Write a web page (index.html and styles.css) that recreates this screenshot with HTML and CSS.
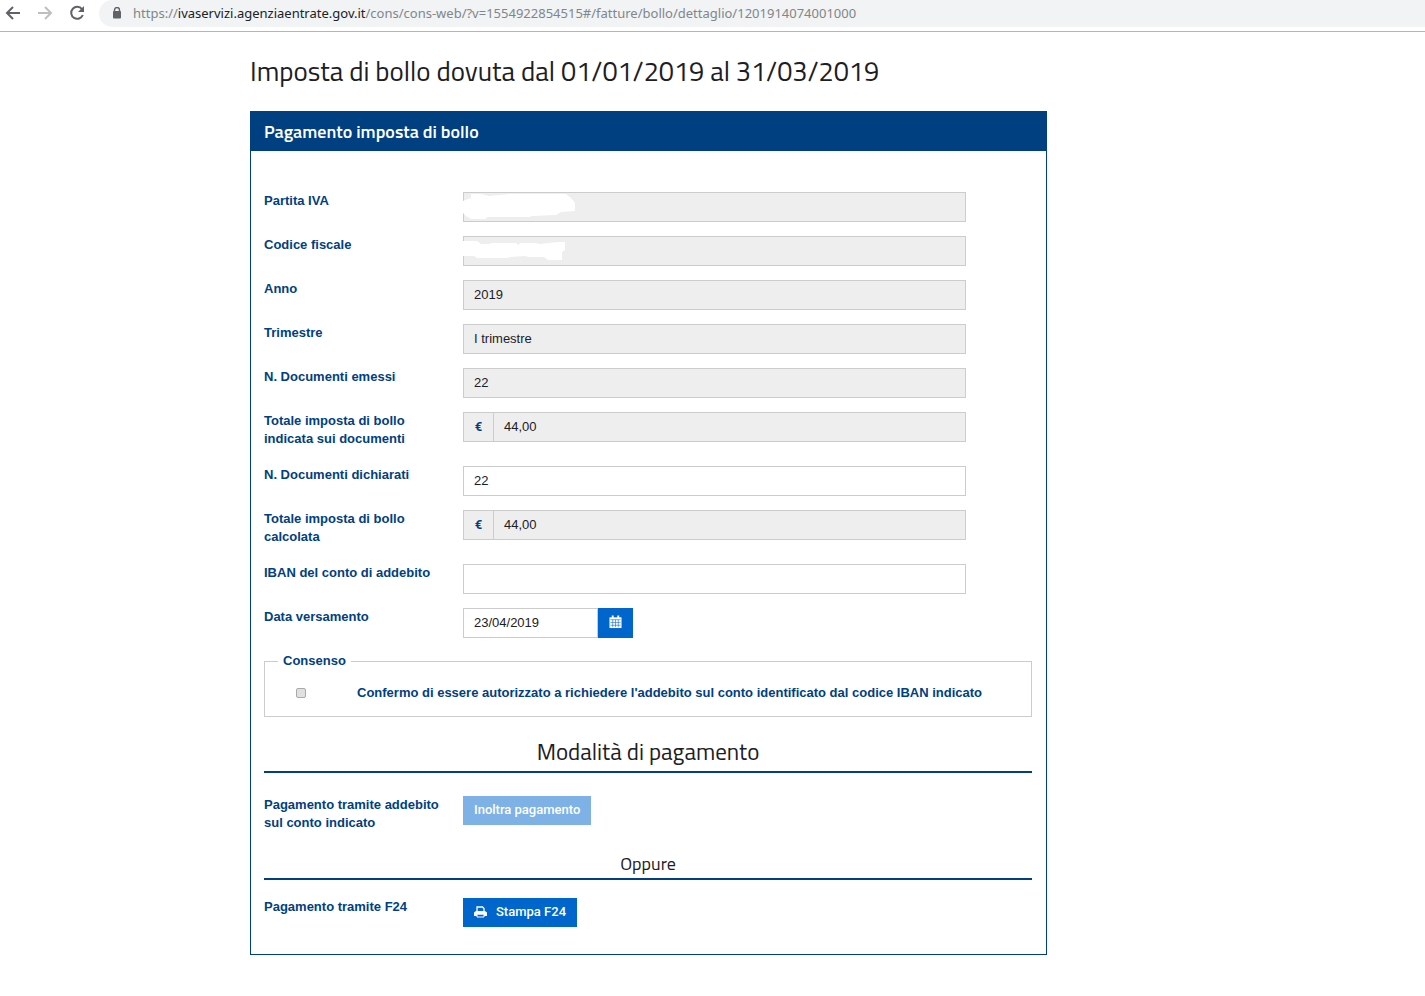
FILE: index.html
```html
<!DOCTYPE html>
<html lang="it">
<head>
  <meta charset="UTF-8">
  <meta name="viewport" content="width=device-width, initial-scale=1">
  <title>Imposta di bollo</title>
  <link rel="stylesheet" href="styles.css">
</head>
<body>
  <header class="toolbar">
    <button type="button" class="nav-btn" aria-label="Indietro">
      <svg width="16" height="16" viewBox="0 0 16 16"><path d="M15 8H2M8 2L2 8l6 6" fill="none" stroke="#5f6368" stroke-width="2"/></svg>
    </button>
    <button type="button" class="nav-btn" aria-label="Avanti">
      <svg width="16" height="16" viewBox="0 0 16 16"><path d="M1 8h13M8 2l6 6-6 6" fill="none" stroke="#bdc0c3" stroke-width="2"/></svg>
    </button>
    <button type="button" class="nav-btn" aria-label="Ricarica">
      <svg width="16" height="16" viewBox="0 0 16 16"><path d="M13 4.2A6 6 0 1 0 13.8 10" fill="none" stroke="#5f6368" stroke-width="2"/><path d="M15 1v6H9z" fill="#5f6368"/></svg>
    </button>
    <div class="address">
      <svg width="10" height="12" viewBox="0 0 10 12"><path d="M2.5 5V3a2.5 2.5 0 0 1 5 0v2" fill="none" stroke="#5f6368" stroke-width="1.4"/><rect x="1" y="4" width="8" height="7.5" rx="1" fill="#5f6368"/></svg>
      <span class="url">https://<span class="host">ivaservizi.agenziaentrate.gov.it</span>/cons/cons-web/?v=1554922854515#/fatture/bollo/dettaglio/1201914074001000</span>
    </div>
  </header>

  <main class="container">
    <h1>Imposta di bollo dovuta dal 01/01/2019 al 31/03/2019</h1>

    <section class="panel">
      <h2 class="panel-heading">Pagamento imposta di bollo</h2>
      <form class="panel-body">
        <div class="row">
          <label for="piva">Partita IVA</label>
          <div class="field">
            <input type="text" id="piva" class="control" readonly>
            <svg class="mask" width="114" height="30" viewBox="0 0 114 30"><path d="M0 9L8 6V2h10l8 2 20-2h57l5 4 4 5v8l-14 1-5 3-24 1-3 1H25l-3 2H8l-5-3-3-3z" fill="#fff"/></svg>
          </div>
        </div>
        <div class="row">
          <label for="cf">Codice fiscale</label>
          <div class="field">
            <input type="text" id="cf" class="control" readonly>
            <svg class="mask" width="114" height="30" viewBox="0 0 114 30"><path d="M0 5h14l4 3h8l3-1h24l2 2 3-2h14l5 1 18-2h7v8l-3 2v8H85l-4-3H66l-4-1-15 1-2 1H14l-3-2H0z" fill="#fff"/></svg>
          </div>
        </div>
        <div class="row">
          <label for="anno">Anno</label>
          <div class="field"><input type="text" id="anno" class="control" value="2019" readonly></div>
        </div>
        <div class="row">
          <label for="trimestre">Trimestre</label>
          <div class="field"><input type="text" id="trimestre" class="control" value="I trimestre" readonly></div>
        </div>
        <div class="row">
          <label for="emessi">N. Documenti emessi</label>
          <div class="field"><input type="text" id="emessi" class="control" value="22" readonly></div>
        </div>
        <div class="row">
          <label for="totIndicata">Totale imposta di bollo indicata sui documenti</label>
          <div class="field">
            <span class="addon">€</span>
            <input type="text" id="totIndicata" class="control" value="44,00" readonly>
          </div>
        </div>
        <div class="row">
          <label for="dichiarati">N. Documenti dichiarati</label>
          <div class="field"><input type="text" id="dichiarati" class="control" value="22"></div>
        </div>
        <div class="row">
          <label for="totCalcolata">Totale imposta di bollo calcolata</label>
          <div class="field">
            <span class="addon">€</span>
            <input type="text" id="totCalcolata" class="control" value="44,00" readonly>
          </div>
        </div>
        <div class="row">
          <label for="iban">IBAN del conto di addebito</label>
          <div class="field"><input type="text" id="iban" class="control"></div>
        </div>
        <div class="row">
          <label for="data">Data versamento</label>
          <div class="field field-date">
            <input type="text" id="data" class="control" value="23/04/2019">
            <button type="button" class="btn btn-icon" aria-label="Apri calendario">
              <svg width="14" height="14" viewBox="0 0 14 14"><path d="M.5 2h13v11.500H.5z" fill="#fff"/><path d="M3 0h2v3H3zM9 0h2v3H9z" fill="#fff"/><path d="M1.500 4.500h11M1.500 7.500h11M1.500 10.500h11M4 4.500v8M7 4.500v8M10 4.500v8" stroke="#06c" stroke-width=".6"/></svg>
            </button>
          </div>
        </div>

        <fieldset class="consent">
          <legend>Consenso</legend>
          <input type="checkbox" id="consenso">
          <label for="consenso">Confermo di essere autorizzato a richiedere l'addebito sul conto identificato dal codice IBAN indicato</label>
        </fieldset>

        <h3 class="divider">Modalità di pagamento</h3>
        <div class="row">
          <span class="label">Pagamento tramite addebito sul conto indicato</span>
          <div class="field"><button type="button" class="btn" disabled>Inoltra pagamento</button></div>
        </div>

        <h4 class="divider">Oppure</h4>
        <div class="row">
          <span class="label">Pagamento tramite F24</span>
          <div class="field">
            <button type="button" class="btn">
              <svg width="13" height="12" viewBox="0 0 13 12"><path d="M3 6V1h5.500L10 2.500V6" fill="none" stroke="#fff" stroke-width="1.300"/><path d="M2 5h9l2 1.500V10H0V6.500z" fill="#fff"/><path d="M3 8.200h7V11H3z" fill="#06c" stroke="#fff"/></svg>
              Stampa F24
            </button>
          </div>
        </div>
      </form>
    </section>
  </main>
</body>
</html>
```
FILE: styles.css
```css
* {
  box-sizing: border-box;
}

body {
  margin: 0;
  background: #fff;
  color: #1c2024;
  font-family: Roboto, "Liberation Sans", sans-serif;
  font-size: 13px;
  line-height: 18px;
}

/* browser bar */
.toolbar {
  display: flex;
  align-items: flex-start;
  height: 32px;
  padding-left: 5px;
  border-bottom: 1px solid #b4b5b6;
}

.nav-btn {
  display: flex;
  width: 16px;
  height: 26px;
  margin-right: 16px;
  padding: 0;
  align-items: center;
  border: 0;
  background: none;
}

.address {
  display: flex;
  flex: 1;
  gap: 11px;
  align-items: center;
  height: 27px;
  margin-left: -2px;
  padding: 0 0 2px 13px;
  border-radius: 14px 0 0 14px;
  background: #f1f3f4;
  color: #80868b;
  font-family: "Segoe UI", "Noto Sans", sans-serif;
  font-size: 13px;
  white-space: nowrap;
}

.host {
  color: #202124;
}

.container {
  max-width: 797px;
  margin-left: 250px;
  padding-bottom: 40px;
}

h1,
h2,
h3,
h4 {
  margin: 0;
  font-family: "Titillium Web", Roboto, sans-serif;
  font-weight: 400;
}

h1 {
  padding: 23px 0 25px;
  font-size: 27px;
  line-height: 31px;
}

.panel {
  border: 1px solid #004080;
}

.panel-heading {
  padding: 10px 13px;
  background: #004080;
  color: #fff;
  font-size: 18px;
  font-weight: 600;
  line-height: 19px;
}

.panel-body {
  padding: 41px 14px 26px 13px;
}

.row {
  display: grid;
  grid-template-columns: 175px minmax(0, 1fr);
  gap: 24px;
  min-height: 30px;
  margin-bottom: 14px;
  padding-right: 66px;
}

.row:last-child {
  margin-bottom: 0;
}

label,
.label,
legend {
  color: #004080;
  font-family: "Liberation Sans", Arial, sans-serif;
  font-weight: 700;
}

.row label,
.row .label {
  margin-bottom: 4px;
}

.field {
  position: relative;
  display: flex;
  align-items: flex-start;
}

.control {
  flex: 1;
  min-width: 0;
  height: 30px;
  padding: 0 10px 1px;
  border: 1px solid #ccc;
  border-radius: 0;
  background: #fff;
  color: #1c2024;
  font-family: "Liberation Sans", Arial, sans-serif;
  font-size: 13px;
}

.control:read-only {
  background: #eee;
}

/* hides the tax codes */
.mask {
  position: absolute;
  top: 0;
  left: 0;
}

.addon {
  width: 30px;
  height: 30px;
  border: 1px solid #ccc;
  border-right: 0;
  background: #eee;
  color: #004080;
  font-weight: 700;
  line-height: 28px;
  text-align: center;
}

.field-date {
  width: 170px;
}

.btn {
  display: inline-flex;
  gap: 9px;
  align-items: center;
  height: 29px;
  padding: 0 11px 2px;
  border: 0;
  background: #06c;
  color: #fff;
  font-family: inherit;
  font-size: 13px;
  font-weight: 500;
}

.btn:disabled {
  opacity: 0.5;
}

.btn-icon {
  width: 35px;
  height: 30px;
}

.consent {
  display: flex;
  align-items: center;
  min-width: 0;
  margin: 0;
  padding: 14px 31px;
  border: 1px solid #ccc;
}

.consent legend {
  margin-left: -18px;
  padding: 0 5px;
}

.consent input {
  appearance: none;
  width: 10px;
  height: 10px;
  margin: 0 51px 0 0;
  border: 1px solid #a9a9a9;
  border-radius: 2px;
  background: #e0e0e0;
}

.consent input:checked {
  background: #06c;
}

.divider {
  margin-bottom: 23px;
  border-bottom: 2px solid #004080;
  text-align: center;
}

h3.divider {
  padding: 20px 0 4px;
  font-size: 23px;
  line-height: 30px;
}

h4.divider {
  margin-bottom: 18px;
  padding: 4px 0;
  font-size: 18px;
  line-height: 20px;
}
```
